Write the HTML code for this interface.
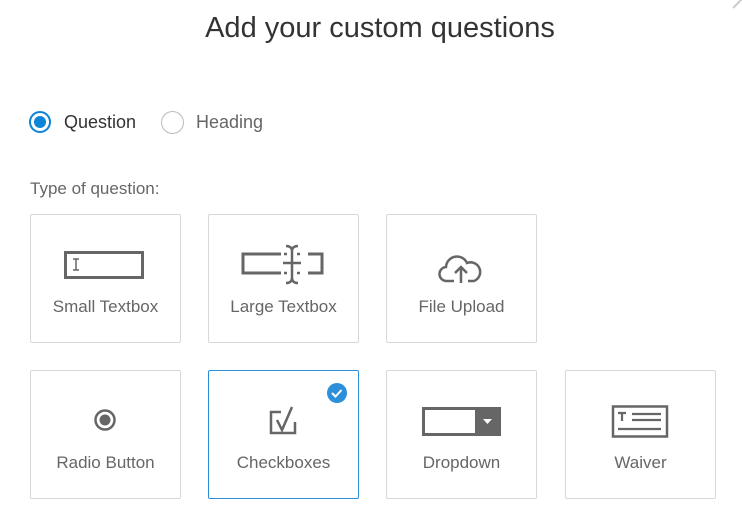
<!DOCTYPE html><html><head><style>
body{margin:0;width:742px;height:522px;background:#fff;font-family:"Liberation Sans",sans-serif;position:relative;overflow:hidden}
.t{position:absolute;top:12px;left:0;width:760px;text-align:center;font-size:29px;color:#333;font-weight:300}
.card{position:absolute;width:151px;height:129px;border:1px solid #d8d8d8;border-radius:2px;box-sizing:border-box}
.card .l{position:absolute;top:82px;width:100%;text-align:center;font-size:17px;color:#666}
.sel{border-color:#2b90d9}
.lab{position:absolute;font-size:18px}
svg.ov{position:absolute;left:0;top:0}
</style></head><body>
<div class="t">Add your custom questions</div>
<div style="position:absolute;left:29px;top:111px;width:18px;height:18px;border:2px solid #0a84d6;border-radius:50%"></div>
<div style="position:absolute;left:34px;top:116px;width:12px;height:12px;background:#0a84d6;border-radius:50%"></div>
<div class="lab" style="left:64px;top:112px;color:#333">Question</div>
<div style="position:absolute;left:161px;top:111px;width:21px;height:21px;border:1px solid #bbb;border-radius:50%"></div>
<div class="lab" style="left:196px;top:112px;color:#666">Heading</div>
<div style="position:absolute;left:30px;top:179px;font-size:17px;color:#666">Type of question:</div>

<div class="card" style="left:30px;top:214px"><div class="l">Small Textbox</div></div>
<div class="card" style="left:208px;top:214px"><div class="l">Large Textbox</div></div>
<div class="card" style="left:386px;top:214px"><div class="l">File Upload</div></div>
<div class="card" style="left:30px;top:370px"><div class="l">Radio Button</div></div>
<div class="card sel" style="left:208px;top:370px"><div class="l">Checkboxes</div></div>
<div class="card" style="left:386px;top:370px"><div class="l">Dropdown</div></div>
<div class="card" style="left:565px;top:370px"><div class="l">Waiver</div></div>

<svg class="ov" width="742" height="522" fill="none" stroke="#666">
<rect x="65.5" y="252.5" width="77" height="25" stroke-width="3"/>
<path d="M73 259h6M76 259v11M73 270h6" stroke-width="1.5"/>
<path d="M281 254h-38v19h38M308 254h14v19h-14" stroke-width="3"/>
<path d="M284 254h3M297 254h3M284 273h3M297 273h3M283 263h18" stroke-width="2.5"/>
<path d="M286 246c4 0 6 2 6 5v27c0 3 -2 5 -6 5M298 246c-4 0 -6 2 -6 5M298 283c-4 0 -6 -2 -6 -5" stroke-width="2.5"/>
<path d="M454 281h-7a7 7 0 0 1 -1 -14a11 11 0 0 1 21 -4a9 9 0 0 1 7 18h-6" stroke-width="2.5"/>
<path d="M461 283v-16M455 273l6-6 6 6" stroke-width="2.5"/>
<circle cx="105" cy="420" r="9.5" stroke-width="2.5"/><circle cx="105" cy="420" r="5.5" fill="#666" stroke="none"/>
<path d="M281 412h-10v21h24v-11" stroke-width="2.5"/>
<path d="M277 420l5 10l10-23" stroke-width="2.5"/>
<circle cx="337" cy="393" r="10" fill="#2b90d9" stroke="none"/>
<path d="M332 393l3.5 3.5l6-6.5" stroke="#fff" stroke-width="2"/>
<rect x="422" y="407" width="79" height="29" fill="#666" stroke="none"/>
<rect x="425" y="410" width="50" height="23" fill="#fff" stroke="none"/>
<path d="M483 419h9l-4.5 5z" fill="#fff" stroke="none"/>
<rect x="613" y="406.5" width="54" height="30" stroke-width="2.5"/>
<path d="M618 413h8M622 413v8M632 414h29M632 420h29M618 429h43" stroke-width="2.2"/>
<path d="M733 8l9-9" stroke="#ccc" stroke-width="2"/>
</svg>
</body></html>
